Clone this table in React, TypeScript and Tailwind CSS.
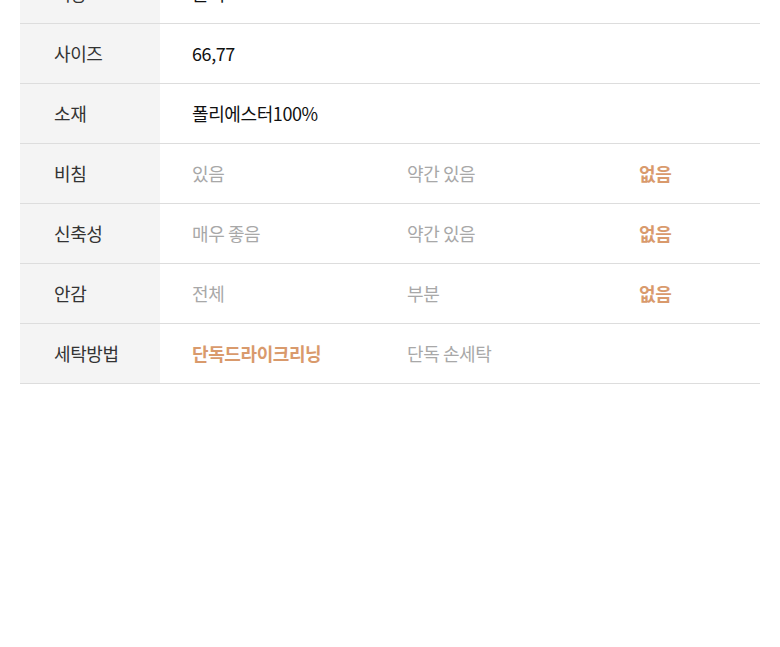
import React from 'react';

type Option = { text: string; active?: boolean };

interface Row {
  label: string;
  value?: string;
  options?: Option[];
}

const rows: Row[] = [
  { label: '색상', value: '블랙' },
  { label: '사이즈', value: '66,77' },
  { label: '소재', value: '폴리에스터100%' },
  { label: '비침', options: [{ text: '있음' }, { text: '약간 있음' }, { text: '없음', active: true }] },
  { label: '신축성', options: [{ text: '매우 좋음' }, { text: '약간 있음' }, { text: '없음', active: true }] },
  { label: '안감', options: [{ text: '전체' }, { text: '부분' }, { text: '없음', active: true }] },
  { label: '세탁방법', options: [{ text: '단독드라이크리닝', active: true }, { text: '단독 손세탁' }] },
];

// 옵션 열 너비 (마지막 열은 남은 공간)
const colWidths = ['w-[215px]', 'w-[232px]', 'flex-1'];

const App: React.FC = () => {
  return (
    <div className="w-[780px] h-[647px] overflow-hidden bg-white font-['Noto_Sans_CJK_KR','Noto_Sans',sans-serif]">
      <div className="mx-5 -mt-[36px]">
        {rows.map((row) => (
          <div key={row.label} className="flex h-[60px] border-b border-[#dddddd]">
            <div className="w-[140px] shrink-0 bg-[#f4f4f4] flex items-center pl-[34px] text-[18px] text-[#333333] tracking-[-0.4px]">
              {row.label}
            </div>
            <div className="flex-1 flex items-center pl-8 text-[18px] tracking-[-0.4px]">
              {row.options ? (
                row.options.map((opt, i) => (
                  <span
                    key={opt.text}
                    className={`${colWidths[i]} ${
                      opt.active ? 'text-[#d99a6c] font-semibold' : 'text-[#a8a8a8]'
                    }`}
                  >
                    {opt.text}
                  </span>
                ))
              ) : (
                <span className="text-[#111111]">{row.value}</span>
              )}
            </div>
          </div>
        ))}
      </div>
    </div>
  );
};

export default App;
